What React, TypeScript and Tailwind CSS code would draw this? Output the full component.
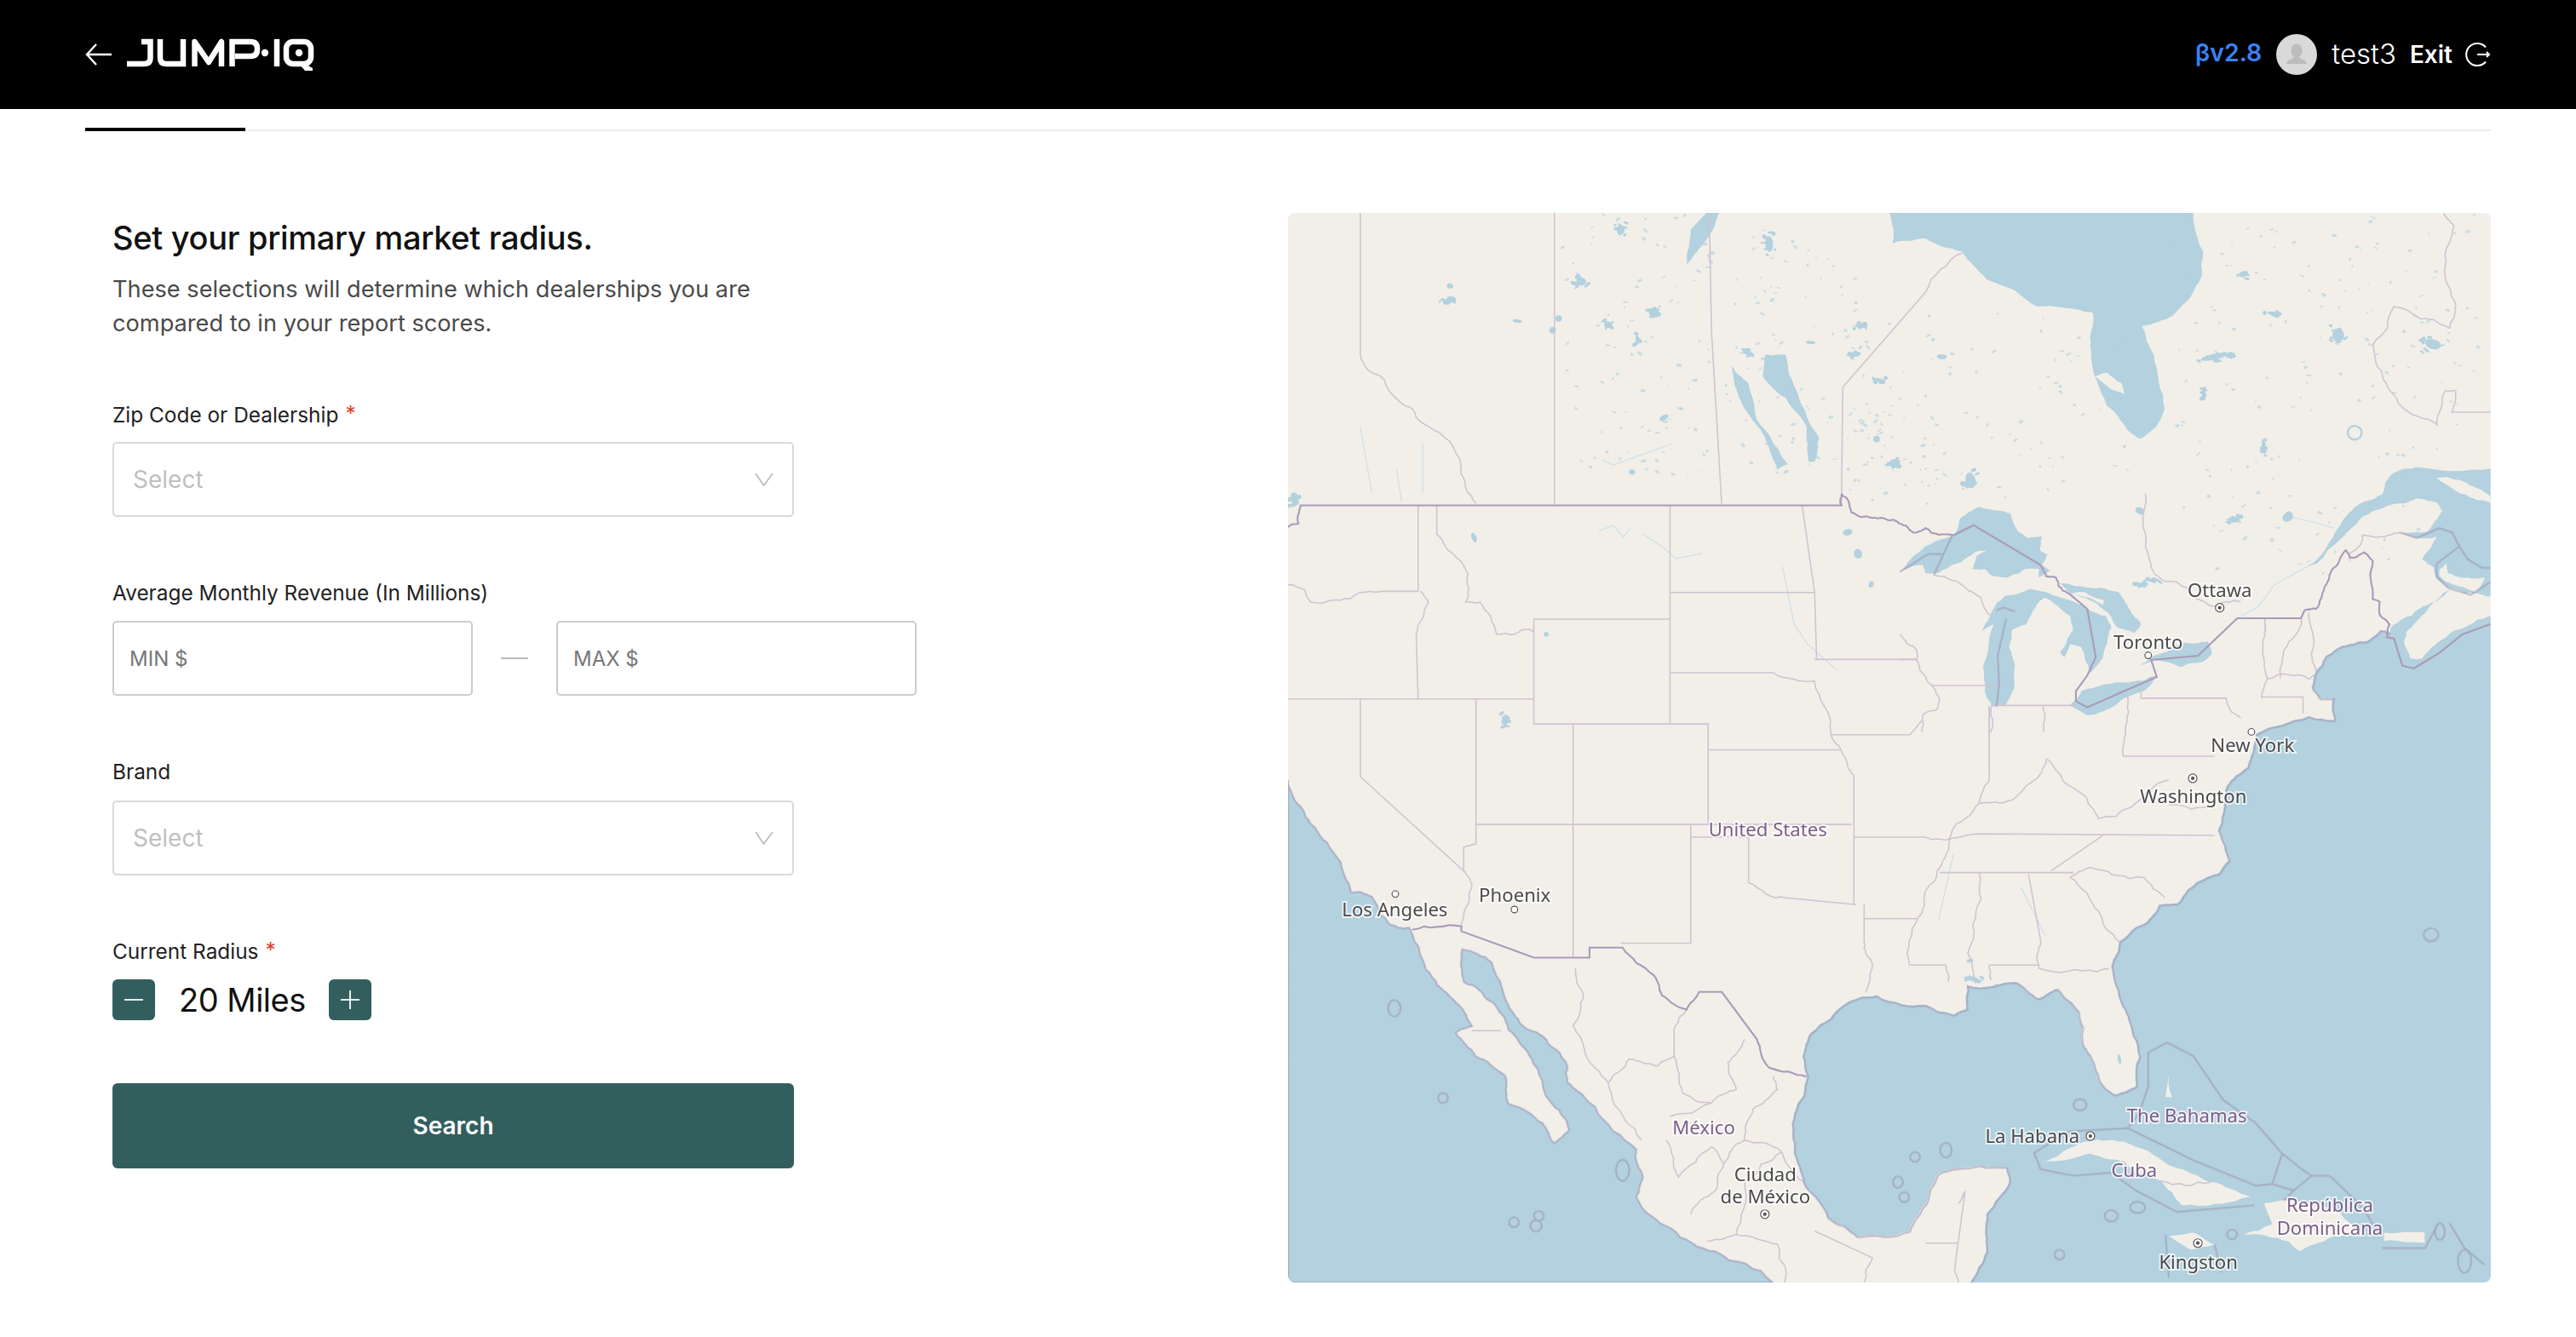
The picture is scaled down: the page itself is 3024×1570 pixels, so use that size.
const WATER = '#b3d1de';
const LAND = '#f2efe9';

// crop coordinates (3x zooms of the lakes and of New England) to map units
const toPath = (x0: number, y0: number, pts: string, close = false) => {
  const p = pts
    .trim()
    .split(/\s+/)
    .map((s) => {
      const [x, y] = s.split(',').map(Number);
      return `${(x0 + x * 0.17284).toFixed(1)} ${(y0 + y * 0.17284).toFixed(1)}`;
    });
  return 'M' + p.join(' L') + (close ? ' Z' : '');
};
const gl = (pts: string, close = false) => toPath(1156.3, 300.7, pts, close);
const ne = (pts: string, close = false) => toPath(1363.7, 280, pts, close);

// adds small wobble to L segments so that coasts and rivers don't look ruled
let seed = 91;
const rnd = () => {
  seed = (seed * 16807) % 2147483647;
  return (seed % 10000) / 10000;
};
const wobble = (a: number[], b: number[], amp: number, depth: number): number[][] => {
  if (depth === 0) return [b];
  const dx = b[0] - a[0];
  const dy = b[1] - a[1];
  const k = (rnd() - 0.5) * amp;
  const m = [(a[0] + b[0]) / 2 - dy * k, (a[1] + b[1]) / 2 + dx * k];
  return [...wobble(a, m, amp, depth - 1), ...wobble(m, b, amp, depth - 1)];
};
const rough = (d: string, amp = 0.28, maxLen = 60) => {
  const tokens = d.match(/[MLHVZ]|-?[\d.]+/g) || [];
  let i = 0;
  let cur = [0, 0];
  let out = '';
  while (i < tokens.length) {
    const c = tokens[i++];
    if (c === 'Z') {
      out += 'Z';
    } else if (c === 'H') {
      cur = [Number(tokens[i++]), cur[1]];
      out += `L${cur[0]} ${cur[1]}`;
    } else if (c === 'V') {
      cur = [cur[0], Number(tokens[i++])];
      out += `L${cur[0]} ${cur[1]}`;
    } else {
      const p = [Number(tokens[i++]), Number(tokens[i++])];
      if (c === 'M') {
        out += `M${p[0]} ${p[1]}`;
      } else if (Math.hypot(p[0] - cur[0], p[1] - cur[1]) > maxLen) {
        out += `L${p[0]} ${p[1]}`;
      } else {
        wobble(cur, p, amp, 3).forEach((q) => {
          out += `L${q[0].toFixed(1)} ${q[1].toFixed(1)}`;
        });
      }
      cur = p;
    }
  }
  return out;
};

const pacific = rough(
  'M784 475 L793 493 L803 508 L818 532 L822 543 L835 546 L846 563 L858 565 L864 579 L875 600 L888 612 L896 625 L886 629 L898 643 L916 655 L918 672 L939 684 L946 696 L955 688 L949 676 L939 661 L931 643 L918 627 L908 610 L891 598 L890 578 L908 586 L917 610 L926 624 L939 631 L954 649 L954 659 L971 674 L996 700 L1000 717 L996 729 L1017 748 L1044 762 L1079 781 L784 781 Z',
  0.2,
  50,
);

const eastCoast =
  'M1515.8 375 L1500.2 382 L1484.7 390.6 L1474.3 401 L1467.4 401 L1463.1 390.6 L1464.8 384.6 L1476 373.3 L1491.6 358.1 L1477.8 368.1 L1467.4 375 L1455.3 382 L1454.4 385.4 L1448.4 383.7 L1439.7 390.6 L1429.4 392.3 L1415.5 399.3 L1409.5 408.8 L1406.9 418.3 L1412.1 425.2 L1420 425 L1420.6 438.6 L1405 436 L1373 447 L1368 467 L1355 479 L1353 495 L1350 505.6 L1356.5 524 L1350 532 L1333 540.5 L1325 550 L1314 551 L1307 561 L1290 573 L1285 588 L1290 608 L1296 622.5 L1302 643 L1300 661.5 L1287 666.6 L1282 663.5 L1275 651 L1267 635 L1265 616 L1252 602 L1240 608 L1227 598 L1197 600 L1197 614 L1189 618 L1172 612 L1142 606 L1125 610 L1102 629 L1097 643 L1100 655 L1092 678 L1092 702.5 L1099 723 L1112 741 L1130 753 L1162 749.6 L1172 733 L1179 715 L1204 709.6 L1221 710.6 L1223 719 L1209 739 L1209 762 L1199 781';
const eastRough = rough(eastCoast, 0.16, 50);
const atlantic = eastRough + ' L1516 781 Z';

const hudson = rough(
  'M1150 129 L1152 148 L1172 145 L1194 153 L1209 170 L1240 186.6 L1273.6 190 L1272 205 L1275 229 L1282 246.6 L1295 262 L1302.5 267 L1312.5 259.7 L1317.5 248.8 L1311 216 L1303.7 198.6 L1322.6 192 L1340 168 L1341 153 L1335 129 Z',
  0.14,
);

const waters = [
  ne(
    '880,30 620,25 540,45 510,80 500,120 430,150 370,200 330,260 270,350 235,375 270,365 350,280 430,200 520,160 620,135 690,150 710,180 690,210 660,250 610,255 570,255 620,275 690,270 670,310 640,350 680,380 690,420 740,450 790,470 880,480',
    true,
  ),
  gl(
    '0,275 60,210 130,165 195,140 210,90 280,45 390,70 415,130 450,155 500,150 495,200 520,215 500,250 530,270 490,295 490,265 440,265 380,295 330,290 300,265 255,265 270,220 305,200 265,205 215,240 130,280 90,280 80,250 20,265',
    true,
  ),
  gl(
    '510,345 600,375 660,405 725,430 745,470 715,580 690,610 670,630 655,590 640,540 600,530 580,575 565,560 590,510 610,480 600,430 550,390 510,365 495,375 470,410 445,460 395,480 385,540 405,610 405,680 370,745 325,750 300,700 295,600 315,520 330,460 290,482 340,385 370,360 460,335',
    true,
  ),
  gl('565,315 640,325 770,345 800,390 850,460 825,490 760,465 735,420 690,385 600,350', true),
  gl('600,745 640,695 800,665 905,640 860,695 790,720 720,765 660,780', true),
  gl('845,605 885,575 990,525 1085,520 1100,560 1070,590 990,610 900,585', true),
  'M1074.4 216 L1087 216 L1094.4 240 L1107 266 L1104.5 281 L1100.7 281 L1099.5 259.7 L1087 242.2 L1073 229 Z',
  'M1054 222.6 L1064.3 233.5 L1069.3 255.3 L1081.9 272.8 L1088.2 282.6 L1081.9 285.9 L1074.3 266.2 L1061.8 248.8 L1056 235 Z',
  'M1039 129 L1046.7 129 L1036.6 148.4 L1026.6 161.5 L1029 139.7 Z',
].map((d) => rough(d, 0.14));

type Blob = { x: number; y: number; rx: number; ry: number; r: number };

const smallLakes: number[][] = [
  [882.6, 174, 2, 1.5], [882, 183, 7, 1.8], [986.4, 139.7, 4, 5], [962.5, 171.3, 5, 4], [1006.5, 189.9, 5, 4],
  [978.8, 197.5, 4, 3], [948.7, 193.8, 2, 2], [945, 201, 2, 2], [923.6, 195.3, 3, 1], [996.4, 206.2, 1.5, 4],
  [1063, 213.9, 4, 3], [1076.8, 148.4, 4, 8], [1102, 208.4, 3, 1], [1132.1, 198.6, 4, 2], [1127, 216, 4, 2],
  [1143.4, 231.3, 5, 2], [1142.2, 267.3, 2, 2], [1152.2, 281.5, 4, 3], [1124.6, 324, 3, 2], [1130.9, 337.1, 2.5, 3],
  [1138.9, 355.7, 1.5, 2], [897.2, 327.3, 1.5, 3], [916, 438.6, 3, 5], [941.2, 386.2, 1.5, 1.5], [1012.8, 254.2, 3, 1.5],
  [993.4, 287.4, 2, 1.5], [788, 303.3, 4, 6], [1181.9, 217.1, 3, 1.5], [1199.4, 292.4, 5, 8], [1347.7, 217.1, 14, 3],
  [1365.3, 166.9, 4, 3], [1384.2, 191, 7, 2], [1423.1, 204, 6, 7], [1480.9, 209.5, 8, 5], [1393, 314.2, 2.5, 3],
  [1360.3, 316.4, 5, 3], [1302.5, 355.7, 4, 1.5], [1341.4, 240, 2, 6], [1302.5, 311, 3, 2], [1377.9, 271.7, 2, 8],
  [1200, 596, 8, 2], [1213, 603, 6, 3], [1199, 585, 2, 1], [1290, 645, 1, 3], [1310, 353.5, 5, 1.5], [1392, 315, 3, 2.5],
];

const lakeBlobs = (() => {
  const out: Blob[] = [];
  for (const [x, y, rx, ry] of smallLakes) {
    if (Math.max(rx, ry) <= 3) {
      out.push({ x, y, rx, ry, r: rnd() * 60 - 30 });
      continue;
    }
    out.push({ x, y, rx: rx * 0.6, ry: ry * 0.6, r: rnd() * 40 - 20 });
    for (let i = 0; i < 9; i++) {
      out.push({
        x: x + (rnd() - 0.5) * rx * 1.8,
        y: y + (rnd() - 0.5) * ry * 1.8,
        rx: 0.6 + rnd() * 1.8,
        ry: 0.4 + rnd() * 1.1,
        r: rnd() * 90 - 45,
      });
    }
  }
  return out;
})();

// tiny lakes that give the Canadian shield its speckle
const speckle = (() => {
  const out: Blob[] = [];
  const regions = [
    [950, 130, 180, 160, 170],
    [1130, 190, 170, 120, 80],
    [1320, 130, 190, 220, 170],
    [1125, 240, 60, 70, 40],
  ];
  for (const [x, y, w, h, n] of regions) {
    for (let i = 0; i < n; i++) {
      out.push({
        x: x + rnd() * w,
        y: y + rnd() * h,
        rx: 0.4 + rnd() * 1.4,
        ry: 0.3 + rnd() * 0.7,
        r: rnd() * 90 - 45,
      });
    }
  }
  return out;
})();

const islands = [
  'M1242 707.6 L1260 699 L1277 694 L1297 697 L1323 710.6 L1345 720 L1370 729 L1348 733 L1328 734 L1315 719 L1292 707.6 L1272 702.4 L1257 706.6 Z',
  'M1378 733 L1390 731 L1423 737 L1438 751.7 L1418 753.7 L1400 762 L1393 756 L1365 751.7 L1383 745.5 Z',
  'M1320 752.7 L1335 750.6 L1348 758 L1333 761 Z',
  'M1451 750.6 L1476 750.6 L1476 756.7 L1451 755.7 Z',
  'M1275 229 L1283 227 L1291 233 L1293 240 L1285 237 Z',
  'M1320 655 L1322 668 L1318 668 Z',
  ne('690,65 730,60 810,90 880,130 880,150 830,140 760,110', true),
  ne('700,385 725,365 730,400 780,415 860,415 830,465 790,450 740,435 700,410', true),
  gl('600,350 650,345 720,375 715,392 660,365', true),
].map((d) => rough(d, 0.14));

const states = [
  'M863.2 307.7 V360', 'M784 355.7 L794.1 359 L797.9 366.6 L815.5 365.5 L840.6 360 H863.2',
  'M864.5 360 L869.5 366.6 L862 386.2 L863.2 425.5',
  'M874.5 307.7 V325.1 L893.4 349.1 L892.1 366.6 L900.9 366.6 L911 386.2 L931.1 383 L933.6 385.2',
  'M933.6 376.9 H1016.5 V440.8 H933.6 Z', 'M1016.5 307.7 V376.9', 'M1016.5 360.7 H1104.5',
  'M1016.5 409.6 H1079.4 L1104.5 414.6', 'M1096.9 307.7 L1104.5 360.7 L1105.7 401.5',
  'M1104.5 401.5 H1167.3', 'M1169.8 438.6 L1162.3 447.3 H1114.5',
  'M1104.5 414.6 L1114.5 447.3 L1124.6 466.5 L1128.4 472 V550.8', 'M1039.7 456.5 H1119.6',
  'M1016.5 440.8 H1039.7 V502', 'M784 425.5 H933.6', 'M828 425.5 V472.9 L890.9 530.3 L895.9 538.5 L890.9 556.9 L889.6 563',
  'M898.4 425.5 V513.9 L890.9 515.9 V530.3', 'M957.5 440.8 V582.5', 'M898.4 502 H1127',
  'M1029.1 502.6 V574.3 H986.4', 'M1029.1 509.7 H1064.3 V537.4 L1086.9 546.7 L1129.6 550.8',
  'M1128.4 509.7 H1171.8 L1204.5 507.7 L1347.7 508.7', 'M1134.6 550.8 V573.3 L1139.7 587.7 L1135.9 604',
  'M1134.6 559.4 H1167.3', 'M1171.8 542.6 L1167.3 559 L1162.3 587.7 H1184.4 L1185.6 597.9',
  'M1180.6 531.3 H1262.3', 'M1204.5 531.3 L1200.7 563 L1202 597.9', 'M1234.6 532.3 L1242.2 573.3 L1240.9 589.7 L1276.1 591.7 L1283.6 589.7',
  'M1210.8 587.7 H1240.9 M1210.8 587.7 L1212 596.9', 'M1259.8 534.3 L1272.3 528.2 L1289.9 533.3 L1305 534.4 L1317.6 546.7',
  'M1259.8 534.3 L1277.3 554.9 L1289.9 573.3', 'M1248.4 530.3 L1279.9 508.7',
  'M1190.6 501.6 L1204.5 489.2 L1224.6 487.2 L1242.2 470.8 L1246 462', 'M1204.5 489.2 L1210.8 474.9 V429.9',
  'M1190.6 501.6 L1186.9 509.7 L1181.9 526.1 L1171.8 542.6', 'M1246 462 L1269.8 485.2 L1277.3 498.5 L1297.4 491.3 L1320 475',
  gl('120,285 240,340 285,365 300,405 320,430'),
  gl('0,495 60,550 70,620 100,665 140,720 130,760 80,780 80,840'),
  gl('0,585 60,585'), gl('110,675 350,675'), gl('320,745 620,745'), gl('320,750 320,840'), gl('505,750 505,840'),
  gl('795,700 795,840'), gl('850,680 850,720 1150,720 1170,770 1200,790'),
  'M1210.8 429.9 V466.7', 'M1293.7 445 L1292.4 460.4 H1347.7',
  ne('85,560 80,660 95,770 75,840'), ne('215,560 205,600 170,640 140,770'), ne('240,535 250,680 265,745'),
  ne('95,772 240,772 265,755'), 'M1376.6 424.4 H1401.7 V434.2',
  'M1320 490 L1347 490', 'M895.9 627.6 H913.5',
  'M958.7 589.7 L963.8 606.1 L957.5 624.5 L965 642 L978.8 659.4 L991.4 645 L1009 649.1 L1019 643 V626.6 L1026.6 614.7',
  'M978.8 659.4 L981.4 669.7 L999 694.3', 'M1019 643 L1024 665.6 L1041.7 671.7 L1056.8 663.5 L1051.7 647.1 L1061.8 632.8',
  'M1079.4 655.3 L1081.9 663.5 L1066.8 675.8 L1061.8 694.3 L1084.4 701.4 L1100 722', 'M1014 694.3 L1021.6 716.8 L1041.7 698.4 L1049.2 708.6 L1044.2 725 L1029.1 739.4',
  'M1056.8 751.7 L1039.1 755.7 M1056.8 751.7 L1081.9 757.8 L1087 774 L1086 781', 'M1104.5 749.6 L1139.7 766 L1134.6 781',
  'M1016.5 679.9 L1041.7 671.7 M1061.8 694.3 L1049.2 708.6 M1056.8 751.7 L1062 720 L1084.4 701.4',
  'M1192 733 L1196 726 L1190 770 L1192 781 M1172 757 H1192',
  'M1292 707 L1297 720 M1315 719 L1330 722 L1345 720',
  ne('385,330 425,290 430,265 490,270 560,255'),
].map((d) => rough(d, 0.22, 38));

const canada = [
  'M828 129.5 V216 L830.6 222.6 L850.7 243.3 L865.8 257.5 L888.4 279.3 L892.1 296.8 L898.4 306.6',
  'M946.2 129.5 V307.7', 'M1040.4 129.5 L1041.7 200.8 L1047.9 306.6', 'M1120.8 307.7 L1121.6 235.7 L1171.8 178 L1194.4 153.9',
  gl('865,0 865,190 885,260 925,305 1010,330 1060,375 1100,395 1200,380'),
  'M1487.2 129.5 L1493.5 137.5 L1488.4 161.5 L1494.7 185.5 L1491 199.7 L1473.4 194.2 L1457 186.6 L1444.4 209.5 L1450.7 231.3 L1460.8 246.6 L1483.4 258.6 L1488.4 237.9 L1494.7 237.9 L1492.2 250.9 H1516',
].map((d) => rough(d, 0.22, 35));

const international = [
  rough('M784 320.8 L790.4 318.6 L791.6 307.7 H1120.8 L1121 301 L1127 312 L1139.7 315.3 L1152 316.4 L1156.3 318.8', 0.25, 20),
  rough(gl('0,105 45,135 90,120 190,145'), 0.25),
  gl('190,145 260,110 495,250'),
  rough(gl('495,250 515,290 550,295 560,325 595,350'), 0.25),
  gl('595,350 660,405 690,575 660,640 620,695 620,730 660,752 800,690 905,645 885,585 1050,570 1190,437'),
  'M1361.9 376.4 H1400.5 L1402.6 371.6',
  rough(ne('225,530 265,525 295,450 320,390 370,318 385,345 435,325 465,355 465,490 490,500 490,545 525,580 515,625 540,628'), 0.2),
  ne('540,628 570,725 610,735 700,680 780,615 880,578'),
  rough(
    'M859.5 566.1 L889.6 564 L889.6 567.1 L933.6 583.1 H967.5 V577 H987.6 L1006.5 593.8 L1011.5 606.1 L1026.6 614.7 L1034.1 604 H1048 L1069.3 632.8 L1076.8 650.2 L1099.5 655.7',
    0.16,
    32,
  ),
];

const zones = [
  'M1319 634.8 L1335 643 L1353 669.7 L1373 684 L1389 702.5 L1383 721 L1373 722 L1335 706.5 L1295 687 L1302 678 L1307.5 661.5 V641 Z',
  'M1389 702.5 L1401 712 L1407 716 L1396 725 L1383 721', 'M1407 716 L1418 716 L1438 735 L1448 752',
  'M1396 725 L1390 731', 'M1295 687 L1260 689 L1238 702 L1242 712 L1262 716 L1285 714 L1300 725 L1325 738 L1372 734',
  'M1450 760 L1476 760 L1484 745', 'M1318 752 L1320 778 M1348 758 L1352 775', 'M1491 745 L1500 760 L1512 770',
  ne('560,255 620,275 700,240 745,255 770,305 800,350 850,380 880,380'),
  ne('770,305 690,365 690,410 730,450 810,475 880,430'),
  gl('0,275 100,212 150,212'), gl('120,285 185,145'),
  gl('405,415 365,400 340,410'), gl('375,440 345,570 350,670 340,750'),
];

const rings: number[][] = [
  [1479.6, 569.2, 4.5, 4], [848.7, 614, 3.8, 5], [878.3, 668.6, 3, 3], [921.5, 744.3, 3, 3], [936.6, 740.4, 3, 3],
  [934.9, 746.5, 3.5, 3.5], [987.6, 712.7, 4, 6.5], [1165.6, 704.5, 3, 3], [1155.2, 719.9, 3, 3.5], [1159, 729, 3, 3],
  [1266, 672.7, 4, 3.5], [1184.4, 700.4, 3.5, 4.5], [1301, 735.3, 4.5, 3.5], [1285, 740.4, 4, 3.5], [1253.5, 764, 3, 3],
  [1358.5, 751.7, 3, 3], [1485, 750, 3, 5], [1500, 768, 4, 7],
];

const rivers = [
  'M973 323 L982 320 L988 327 L992 322', 'M1000 325 L1012 333 L1020 340 L1036 337', 'M1085 345 L1092 380 L1100 392 L1118 408',
  'M835 300 L828 260 M850 285 L853 305 M866 270 L866 300', 'M1018 270 L982 283 L975 280',
  ne('235,375 120,440 60,520 0,550'), ne('175,200 260,220 330,240'), ne('85,560 85,620'), 'M1189 520 L1180 560 M1230 540 L1245 570',
];

const cities: [number, number, boolean][] = [
  [1351, 370, true], [1307.5, 399, false], [1370.3, 445.6, false], [1334.6, 473.9, true], [921.8, 553.8, false],
  [849.3, 544.4, false], [1074.2, 739.4, true], [1272.3, 691.8, true], [1337.7, 757, true],
];

const labels: [string, number, number, string][] = [
  ['Ottawa', 1351, 363.5, '#4a4a4a'], ['Toronto', 1307.5, 395, '#4a4a4a'], ['New York', 1371, 458, '#4a4a4a'],
  ['Washington', 1335, 489, '#4a4a4a'], ['United States', 1076, 509, '#7b5f87'], ['Phoenix', 922, 549, '#4a4a4a'],
  ['Los Angeles', 849, 558, '#4a4a4a'], ['México', 1037, 691, '#7b5f87'], ['Ciudad', 1074.5, 719.5, '#4a4a4a'],
  ['de México', 1074.5, 733, '#4a4a4a'], ['La Habana', 1237, 696, '#4a4a4a'], ['The Bahamas', 1331, 683.5, '#7b5f87'],
  ['Cuba', 1299, 716.5, '#7b5f87'], ['República', 1418, 738, '#7b5f87'], ['Dominicana', 1418, 752, '#7b5f87'],
  ['Kingston', 1338, 772.5, '#4a4a4a'],
];

const MapView = () => (
  <div className="w-[1412px] h-[1256px] rounded-lg overflow-hidden shrink-0">
    <svg viewBox="784 129.5 732 651.5" className="block w-full h-full blur-[0.6px]" preserveAspectRatio="none">
      <rect x="784" y="129.5" width="732" height="651.5" fill={LAND} />
      <g fill="none" stroke="#cfe2e8" strokeWidth="0.7">
        {rivers.map((d, i) => (
          <path key={i} d={d} />
        ))}
      </g>
      <path d={pacific} fill={WATER} />
      <path d={atlantic} fill={WATER} />
      <path d={hudson} fill={WATER} />
      {waters.map((d, i) => (
        <path key={i} d={d} fill={WATER} />
      ))}
      {lakeBlobs.map((b, i) => (
        <ellipse key={i} cx={b.x} cy={b.y} rx={b.rx} ry={b.ry} fill={WATER} transform={`rotate(${b.r} ${b.x} ${b.y})`} />
      ))}
      {speckle.map((b, i) => (
        <ellipse key={i} cx={b.x} cy={b.y} rx={b.rx} ry={b.ry} fill={WATER} opacity="0.65" transform={`rotate(${b.r} ${b.x} ${b.y})`} />
      ))}
      {islands.map((d, i) => (
        <path key={i} d={d} fill={LAND} />
      ))}
      <circle cx="1433.2" cy="263.4" r="4.2" fill="none" stroke={WATER} strokeWidth="1.2" />
      <g fill="none" stroke="#cfc3d0" strokeWidth="0.8">
        {states.map((d, i) => (
          <path key={i} d={d} />
        ))}
        {canada.map((d, i) => (
          <path key={i} d={d} />
        ))}
      </g>
      <g fill="none" stroke="#9e9ab8" strokeWidth="1" opacity="0.7">
        <path d={pacific} />
        <path d={'M1454.4 385.4' + eastRough.slice(eastRough.indexOf('L1454.4'))} transform="translate(0.6 0.6)" />
        {zones.map((d, i) => (
          <path key={i} d={d} />
        ))}
        {rings.map(([x, y, rx, ry], i) => (
          <ellipse key={i} cx={x} cy={y} rx={rx} ry={ry} />
        ))}
      </g>
      <g fill="none" stroke="#a99bb8" strokeWidth="1.1">
        {international.map((d, i) => (
          <path key={i} d={d} />
        ))}
      </g>
      {cities.map(([x, y, capital], i) => (
        <g key={i} fill="none">
          <circle cx={x} cy={y} r={capital ? 2.6 : 2} fill="#fff" stroke="#555" strokeWidth="0.6" />
          {capital && <circle cx={x} cy={y} r="1.1" fill="#555" />}
        </g>
      ))}
      <g
        textAnchor="middle"
        fontSize="11.5"
        fontFamily="'Noto Sans', 'Open Sans', sans-serif"
        stroke="#ffffffb0"
        strokeWidth="2"
        className="[paint-order:stroke]"
      >
        {labels.map(([t, x, y, c]) => (
          <text key={t} x={x} y={y} fill={c}>
            {t}
          </text>
        ))}
      </g>
    </svg>
  </div>
);

const Logo = () => (
  <svg viewBox="149 44 222 40" className="w-[222px] h-[40px] block">
    <g fill="none" stroke="#fff" strokeWidth="6.5">
      <path d="M166 49 H176.5 V68 Q176.5 75 169 75 H149" />
      <path d="M188 46 V68 Q188 75 195 75 H215 V46" />
      <path d="M228.5 78 V49 L245 73 L260 49 V78" strokeLinejoin="round" />
      <path d="M272.5 78 V49 H294 Q302 49 302 57 V58 Q302 66 294 66 H276" />
      <path d="M325 46 V78" />
      <rect x="336" y="49" width="29" height="26" rx="8" />
    </g>
    <circle cx="311" cy="62" r="4.2" fill="#fff" />
    <circle cx="351" cy="62" r="4.2" fill="#fff" />
    <path d="M352 76 H360 L367 80 V83 H358 Z" fill="#fff" />
  </svg>
);

const Chevron = () => (
  <svg viewBox="0 0 22 16" className="w-[22px] h-[16px]" fill="none" stroke="#b8b8b8" strokeWidth="1.6">
    <path d="M1 1 L10.5 15 L21 1" />
  </svg>
);

const SelectBox = () => (
  <div className="w-[800px] h-[88px] border-2 border-[#d9d9d9] rounded-[5px] flex items-center justify-between pl-[22px] pr-[22px]">
    <span className="text-[28px] text-[#bfbfbf]">Select</span>
    <Chevron />
  </div>
);

const Label = ({ text, required }: { text: string; required?: boolean }) => (
  <div className="h-[30px] flex items-center gap-[8px] text-[24.4px] text-[#222] leading-none">
    <span>{text}</span>
    {required && <span className="text-[#d9442f] -mt-[4px]">*</span>}
  </div>
);

const MoneyInput = ({ placeholder }: { placeholder: string }) => (
  <input
    placeholder={placeholder}
    className="w-[423px] h-[88px] border-2 border-[#cccccc] rounded-[5px] pl-[18px] text-[24px] placeholder:text-[#777] outline-none"
  />
);

const StepButton = ({ plus }: { plus?: boolean }) => (
  <button className="w-[50px] h-[48px] rounded-[6px] bg-[#335e5e] flex items-center justify-center">
    <svg viewBox="0 0 24 24" className="w-[24px] h-[24px]" stroke="#fff" strokeWidth="1.8" fill="none">
      <path d="M1 12 H23" />
      {plus && <path d="M12 1 V23" />}
    </svg>
  </button>
);

export default function App() {
  return (
    <div className="w-[3024px] h-[1570px] bg-white font-['Inter','Liberation_Sans',sans-serif] overflow-hidden">
      <header className="h-[128px] bg-black px-[100px] flex items-center justify-between">
        <div className="flex items-center gap-[18px]">
          <svg viewBox="0 0 31 26" className="w-[31px] h-[26px]" fill="none" stroke="#fff" strokeWidth="2.4">
            <path d="M31 13 H2 M13 1 L2 13 L13 25" />
          </svg>
          <Logo />
        </div>
        <div className="flex items-center">
          <span className="text-[28.5px] font-semibold text-[#3b82f6] -mt-[4px]">βv2.8</span>
          <div className="w-[48px] h-[48px] ml-[17px] rounded-full bg-[#d9d9d9] flex items-center justify-center">
            <svg viewBox="0 0 48 48" className="w-[48px] h-[48px]" fill="#bcbcbc">
              <ellipse cx="24" cy="19.5" rx="6.5" ry="8" />
              <path d="M12 35 Q12 31 19 29 L22 26 H26 L29 29 Q36 31 36 35 Z" />
            </svg>
          </div>
          <span className="ml-[17px] text-[33px] font-light text-white">test3</span>
          <span className="ml-[16px] text-[28px] font-semibold text-white">Exit</span>
          <svg viewBox="0 0 30 30" className="ml-[15px] w-[30px] h-[30px]" fill="none" stroke="#fff" strokeWidth="2">
            <path d="M24 6.5 A13 13 0 1 0 24 23.5" />
            <path d="M14 15 H28 M25 12 L28 15 L25 18" />
          </svg>
        </div>
      </header>

      <div className="mx-[100px] mt-[22px] h-[4px] flex">
        <div className="w-[188px] bg-black" />
        <div className="flex-1 mt-[2px] h-[2px] bg-[#eeeeee]" />
      </div>

      <main className="mx-[100px] mt-[96px] flex justify-between">
        <section className="pl-[32px] w-[1000px]">
          <h1 className="text-[38px] tracking-[-0.3px] leading-[58px] font-medium text-[#111]">Set your primary market radius.</h1>
          <p className="mt-[12px] text-[27.2px] leading-[40px] text-[#4a4a4a] w-[800px]">
            These selections will determine which dealerships you are compared to in your report scores.
          </p>

          <div className="mt-[72px]">
            <Label text="Zip Code or Dealership" required />
            <div className="mt-[17px]">
              <SelectBox />
            </div>
          </div>

          <div className="mt-[74px]">
            <Label text="Average Monthly Revenue (In Millions)" />
            <div className="mt-[18px] flex items-center">
              <MoneyInput placeholder="MIN $" />
              <div className="w-[32px] h-[2px] bg-[#bbbbbb] mx-[33px]" />
              <MoneyInput placeholder="MAX $" />
            </div>
          </div>

          <div className="mt-[74px]">
            <Label text="Brand" />
            <div className="mt-[19px]">
              <SelectBox />
            </div>
          </div>

          <div className="mt-[74px]">
            <Label text="Current Radius" required />
            <div className="mt-[18px] flex items-center">
              <StepButton />
              <span className="ml-[28px] w-[176px] text-[38px] leading-none tracking-[-0.5px] text-[#111]">20 Miles</span>
              <StepButton plus />
            </div>
          </div>

          <button className="mt-[74px] w-[800px] h-[100px] rounded-[6px] bg-[#335e5e] text-white text-[28px] font-semibold">
            Search
          </button>
        </section>
        <MapView />
      </main>
    </div>
  );
}
